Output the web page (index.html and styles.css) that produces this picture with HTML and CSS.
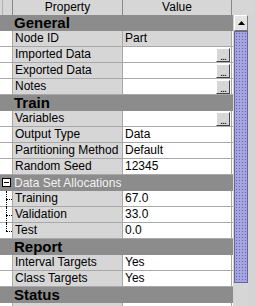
FILE: index.html
```html
<!DOCTYPE html>
<html lang="en">
<head>
    <meta charset="UTF-8">
    <title>Properties</title>
    <link rel="stylesheet" href="styles.css">
</head>
<body>

    <div class="panel">
        <div class="sheet">
            <div class="row head">
                <div class="gutter"></div>
                <div class="cell">Property</div>
                <div class="cell">Value</div>
            </div>

            <div class="group">General</div>
            <div class="row">
                <div class="gutter"></div>
                <div class="cell name">Node ID</div>
                <div class="cell value readonly">Part</div>
            </div>
            <div class="row">
                <div class="gutter"></div>
                <div class="cell name">Imported Data</div>
                <div class="cell value"><span class="dots">...</span></div>
            </div>
            <div class="row">
                <div class="gutter"></div>
                <div class="cell name">Exported Data</div>
                <div class="cell value"><span class="dots">...</span></div>
            </div>
            <div class="row">
                <div class="gutter"></div>
                <div class="cell name">Notes</div>
                <div class="cell value"><span class="dots">...</span></div>
            </div>

            <div class="group">Train</div>
            <div class="row">
                <div class="gutter"></div>
                <div class="cell name">Variables</div>
                <div class="cell value"><span class="dots">...</span></div>
            </div>
            <div class="row">
                <div class="gutter"></div>
                <div class="cell name">Output Type</div>
                <div class="cell value">Data</div>
            </div>
            <div class="row">
                <div class="gutter"></div>
                <div class="cell name">Partitioning Method</div>
                <div class="cell value">Default</div>
            </div>
            <div class="row">
                <div class="gutter"></div>
                <div class="cell name">Random Seed</div>
                <div class="cell value">12345</div>
            </div>

            <div class="subgroup">
                <span class="toggle"></span>
                <span class="subgroup-title">Data Set Allocations</span>
            </div>
            <div class="row">
                <div class="gutter tree"></div>
                <div class="cell name">Training</div>
                <div class="cell value">67.0</div>
            </div>
            <div class="row">
                <div class="gutter tree"></div>
                <div class="cell name">Validation</div>
                <div class="cell value">33.0</div>
            </div>
            <div class="row">
                <div class="gutter tree last"></div>
                <div class="cell name">Test</div>
                <div class="cell value">0.0</div>
            </div>

            <div class="group">Report</div>
            <div class="row">
                <div class="gutter"></div>
                <div class="cell name">Interval Targets</div>
                <div class="cell value">Yes</div>
            </div>
            <div class="row">
                <div class="gutter"></div>
                <div class="cell name">Class Targets</div>
                <div class="cell value">Yes</div>
            </div>

            <div class="group">Status</div>
            <div class="row">
                <div class="gutter"></div>
                <div class="cell name"></div>
                <div class="cell value"></div>
            </div>
        </div>

        <div class="scrollbar">
            <div class="scroll-corner"></div>
            <div class="scroll-track">
                <div class="scroll-up">
                    <svg width="7" height="4" viewBox="0 0 7 4"><path d="M0 4 L3.5 0 L7 4 Z" fill="#000"/></svg>
                </div>
                <div class="scroll-thumb"></div>
            </div>
        </div>
    </div>

</body>
</html>
```

FILE: styles.css
```css
body {
    margin: 0;
    font-family: "Liberation Sans", Arial, sans-serif;
    font-size: 12px;
    background: #d4d4d4;
}

.panel {
    display: flex;
    width: 255px;
    height: 306px;
    overflow: hidden;
}

.sheet {
    width: 233px;
    background: #ffffff;
}

.row {
    display: grid;
    grid-template-columns: 12px 110px 110px;
    height: 15px;
    border-bottom: 1px solid #a8a8a8;
}

.gutter {
    background: #ffffff;
    position: relative;
}

.cell {
    border-left: 1px solid #a8a8a8;
    padding-left: 2px;
    line-height: 15px;
    white-space: nowrap;
    overflow: hidden;
    color: #000;
}

.cell.value {
    position: relative;
    background: #ffffff;
    border-right: 1px solid #a8a8a8;
}

.cell.name,
.cell.readonly {
    background: #d6d6d6;
}

.row.head {
    height: 15px;
    border-bottom: none;
    background: #d6d6d6;
}

.row.head .gutter {
    background: #d6d6d6;
    border-left: 1px solid #b0b0b0;
    margin-left: 2px;
}

.row.head .cell {
    background: #d6d6d6;
    text-align: center;
    padding-left: 0;
    border-left: 1px solid #888;
    border-right: none;
}

.row.head .cell + .cell {
    border-right: 1px solid #888;
}

.group {
    height: 16px;
    background: #8c8c8c;
    font-size: 15px;
    font-weight: bold;
    line-height: 16px;
    padding-left: 14px;
    color: #000;
}

.subgroup {
    height: 16px;
    background: #8c8c8c;
    color: #f2f2f2;
    line-height: 16px;
    position: relative;
    display: flex;
    align-items: center;
    white-space: nowrap;
}

.subgroup-title {
    padding-left: 14px;
}

.toggle {
    position: absolute;
    left: 2px;
    top: 3px;
    width: 7px;
    height: 7px;
    border: 1px solid #000;
    background: #ffffff;
}

.toggle::after {
    content: "";
    position: absolute;
    left: 1px;
    top: 3px;
    width: 5px;
    height: 1px;
    background: #000;
}

/* dotted tree lines for the nested rows */
.gutter.tree::before {
    content: "";
    position: absolute;
    left: 6px;
    top: 0;
    height: 16px;
    border-left: 1px dotted #000;
}

.gutter.tree.last::before {
    height: 8px;
}

.gutter.tree::after {
    content: "";
    position: absolute;
    left: 6px;
    top: 8px;
    width: 6px;
    border-top: 1px dotted #000;
}

.dots {
    position: absolute;
    right: 1px;
    top: 1px;
    width: 12px;
    height: 12px;
    background: #d6d6d6;
    border: 1px solid;
    border-color: #fff #444 #444 #fff;
    font-size: 11px;
    line-height: 14px;
    text-align: center;
    letter-spacing: -1px;
}

.scrollbar {
    width: 22px;
    display: flex;
    flex-direction: column;
}

.scroll-corner {
    height: 15px;
    background: #d6d6d6;
}

.scroll-track {
    flex: 1;
    width: 14px;
    margin-left: 1px;
    background: #d6d6d6;
    display: flex;
    flex-direction: column;
}

.scroll-up {
    height: 14px;
    display: flex;
    align-items: center;
    justify-content: center;
    background: #e4e4e4;
    border: 1px solid;
    border-color: #fff #777 #777 #fff;
}

.scroll-thumb {
    height: 250px;
    background-color: #a4a4e0;
    background-image: radial-gradient(#6666a8 0.6px, transparent 0.9px);
    background-size: 3px 3px;
    border: 1px solid #66669a;
}
```
